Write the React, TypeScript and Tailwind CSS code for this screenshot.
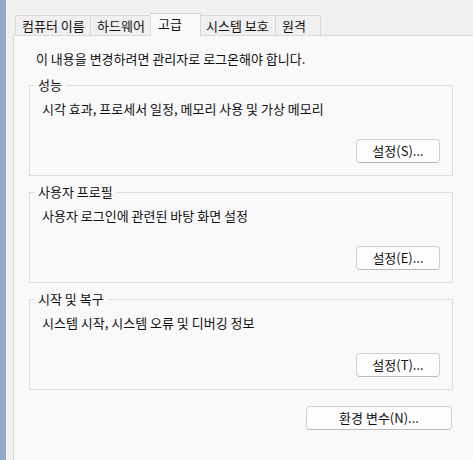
import React from 'react';

const tabs = [
  { label: '컴퓨터 이름', cls: 'w-[75px] h-[20px] border-t border-l pl-[6px] bg-[#f0f0f0]' },
  { label: '하드웨어', cls: 'w-[60px] h-[20px] border-t border-l pl-[6px] bg-[#f0f0f0]' },
  { label: '고급', cls: 'w-[51px] h-[23px] -mb-[1px] border-t border-l border-r pl-[7px] pb-[2px] bg-[#f9f9f9]' },
  { label: '시스템 보호', cls: 'w-[74px] h-[20px] border-t pl-[5px] bg-[#f0f0f0]' },
  { label: '원격', cls: 'w-[46px] h-[20px] border-t border-l border-r pl-[6px] bg-[#f0f0f0]' },
];

const groups = [
  { title: '성능', desc: '시각 효과, 프로세서 일정, 메모리 사용 및 가상 메모리', button: '설정(S)...' },
  { title: '사용자 프로필', desc: '사용자 로그인에 관련된 바탕 화면 설정', button: '설정(E)...' },
  { title: '시작 및 복구', desc: '시스템 시작, 시스템 오류 및 디버깅 정보', button: '설정(T)...' },
];

const WinButton: React.FC<{ label: string; className?: string }> = ({ label, className }) => (
  <button
    type="button"
    className={`h-[24px] rounded-[4px] border border-[#d0d0d0] border-b-[#bababa] bg-[#fdfdfd] text-[13px] leading-[16px] text-[#111] ${className ?? ''}`}
  >
    {label}
  </button>
);

const App: React.FC = () => {
  return (
    <div className="w-[473px] h-[460px] overflow-hidden flex bg-[#f0f0f0] font-['Noto_Sans_CJK_KR','Noto_Sans',sans-serif] text-[13px] leading-[16px] text-[#111]">
      {/* window edge */}
      <div className="w-[6px] shrink-0 bg-[#94aac3]" />

      <div className="flex-1 flex flex-col pl-[7px] pt-[13px]">
        {/* Tabs */}
        <div className="relative z-10 flex items-end h-[22px] pl-[2px]">
          {tabs.map((t) => (
            <div key={t.label} className={`flex items-center shrink-0 border-[#d9d9d9] whitespace-nowrap ${t.cls}`}>
              {t.label}
            </div>
          ))}
        </div>

        {/* Panel */}
        <div className="flex-1 border-t border-l border-[#d9d9d9] bg-[#f9f9f9] pt-[15px] pl-[15px]">
          <p className="pl-[7px]">이 내용을 변경하려면 관리자로 로그온해야 합니다.</p>

          <div className="mt-[10px] flex flex-col gap-[8px] w-[424px]">
            {groups.map((g) => (
              <fieldset key={g.title} className="border border-[#dcdcdc] px-0 pb-[12px]">
                <legend className="ml-[4px] px-[4px] leading-[16px]">{g.title}</legend>
                <div className="flex flex-col px-[12px]">
                  <p className="mt-[8px]">{g.desc}</p>
                  <WinButton label={g.button} className="mt-[22px] self-end w-[84px]" />
                </div>
              </fieldset>
            ))}
          </div>

          <div className="mt-[16px] w-[424px] flex justify-end pr-[1px]">
            <WinButton label="환경 변수(N)..." className="w-[146px]" />
          </div>
        </div>
      </div>
    </div>
  );
};

export default App;
